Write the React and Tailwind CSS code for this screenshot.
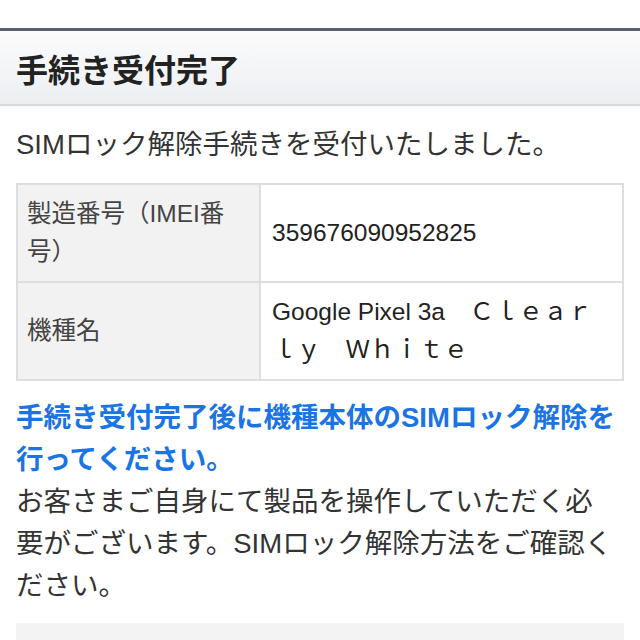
import React from "react";

const font = { fontFamily: '"Liberation Sans", "Noto Sans CJK JP", sans-serif' };

// 受付内容
const rows = [
  { label: "製造番号（IMEI番号）", value: "359676090952825" },
  { label: "機種名", value: "Google Pixel 3a　Ｃｌｅａｒｌｙ　Ｗｈｉｔｅ" },
];

const App = () => {
  return (
    <div className="h-[640px] overflow-hidden bg-white text-[#333]" style={font}>
      {/* ヘッダー */}
      <div className="mt-[28px] border-t-[3px] border-b-2 border-t-[#5b6170] border-b-[#d9dcdf] bg-gradient-to-b from-[#fbfbfc] to-[#eceff2] h-[78px] flex items-center px-4 shadow-[0_2px_2px_rgba(0,0,0,0.04)]">
        <h1 className="text-[32px] font-bold text-[#222] pt-[6px]">手続き受付完了</h1>
      </div>

      <div className="px-4">
        <p className="mt-[18px] text-[27.5px] leading-[42px]">SIMロック解除手続きを受付いたしました。</p>

        {/* 内容テーブル */}
        <table className="mt-[17px] w-full border-collapse">
          <tbody>
            {rows.map((row) => (
              <tr key={row.label}>
                <th className="w-[243px] border-2 border-[#dedede] bg-[#f2f2f2] pl-[9px] pr-2 py-[10px] text-left font-normal text-[24.5px] leading-[38px] text-[#444]">
                  {row.label}
                </th>
                <td className="border-2 border-[#dedede] pl-[11px] pr-3 py-[10px] text-[24.5px] leading-[38px] text-[#222]">
                  {row.value}
                </td>
              </tr>
            ))}
          </tbody>
        </table>

        <div className="mt-[16px] w-[602px] text-[27.5px] leading-[42px]">
          <p className="font-bold text-[#1b74e4]">手続き受付完了後に機種本体のSIMロック解除を行ってください。</p>
          <p className="text-[#333]">お客さまご自身にて製品を操作していただく必要がございます。SIMロック解除方法をご確認ください。</p>
        </div>

        <div className="mt-4 h-[60px] bg-[#f3f3f3]"></div>
      </div>
    </div>
  );
};

export default App;
